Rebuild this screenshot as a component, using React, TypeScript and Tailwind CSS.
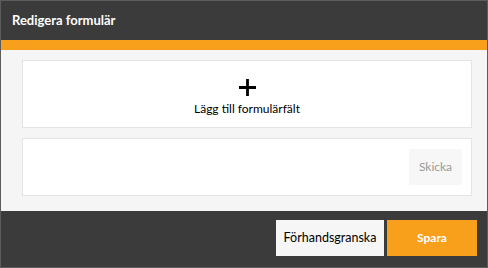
function PlusIcon() {
  return (
    <svg width="17" height="17" viewBox="0 0 17 17" className="block">
      <path d="M8.5 0v17M0 8.5h17" stroke="#000" strokeWidth="2.8" />
    </svg>
  );
}

export default function App() {
  return (
    <div
      className="flex h-[268px] w-[488px] flex-col border border-[#5c5c5c] bg-[#3b3b3b]"
      style={{ fontFamily: "Lato, 'Liberation Sans', sans-serif" }}
    >
      {/* Header */}
      <div className="flex h-[39px] shrink-0 items-center bg-[#3b3b3b] pl-[11px]">
        <h1 className="text-[13px] font-bold text-white">Redigera formulär</h1>
      </div>
      <div className="h-[10px] shrink-0 bg-[#f89f1c]" />

      {/* Form body */}
      <div className="flex shrink-0 flex-col gap-[10px] bg-[#f5f5f5] pt-[10px] pr-[15px] pb-[15px] pl-[21px]">
        <button className="flex h-[68px] flex-col items-center justify-center border border-[#e4e4e4] bg-white pt-[6px]">
          <PlusIcon />
          <span className="mt-[6px] text-[12px] leading-[14px] text-black">
            Lägg till formulärfält
          </span>
        </button>

        <div className="flex h-[58px] items-center justify-end border border-[#e4e4e4] bg-white pr-[9px]">
          <button className="h-[36px] w-[53px] bg-[#f7f7f7] text-[12px] text-[#9a9a9a]">
            Skicka
          </button>
        </div>
      </div>

      {/* Footer */}
      <div className="flex flex-1 items-start justify-end gap-[3px] pt-[9px] pr-[10px]">
        <button className="h-[36px] w-[108px] bg-[#f6f6f6] text-[12.5px] text-black">
          Förhandsgranska
        </button>
        <button className="h-[36px] w-[90px] bg-[#f89f1c] text-[12px] font-bold text-white">
          Spara
        </button>
      </div>
    </div>
  );
}
